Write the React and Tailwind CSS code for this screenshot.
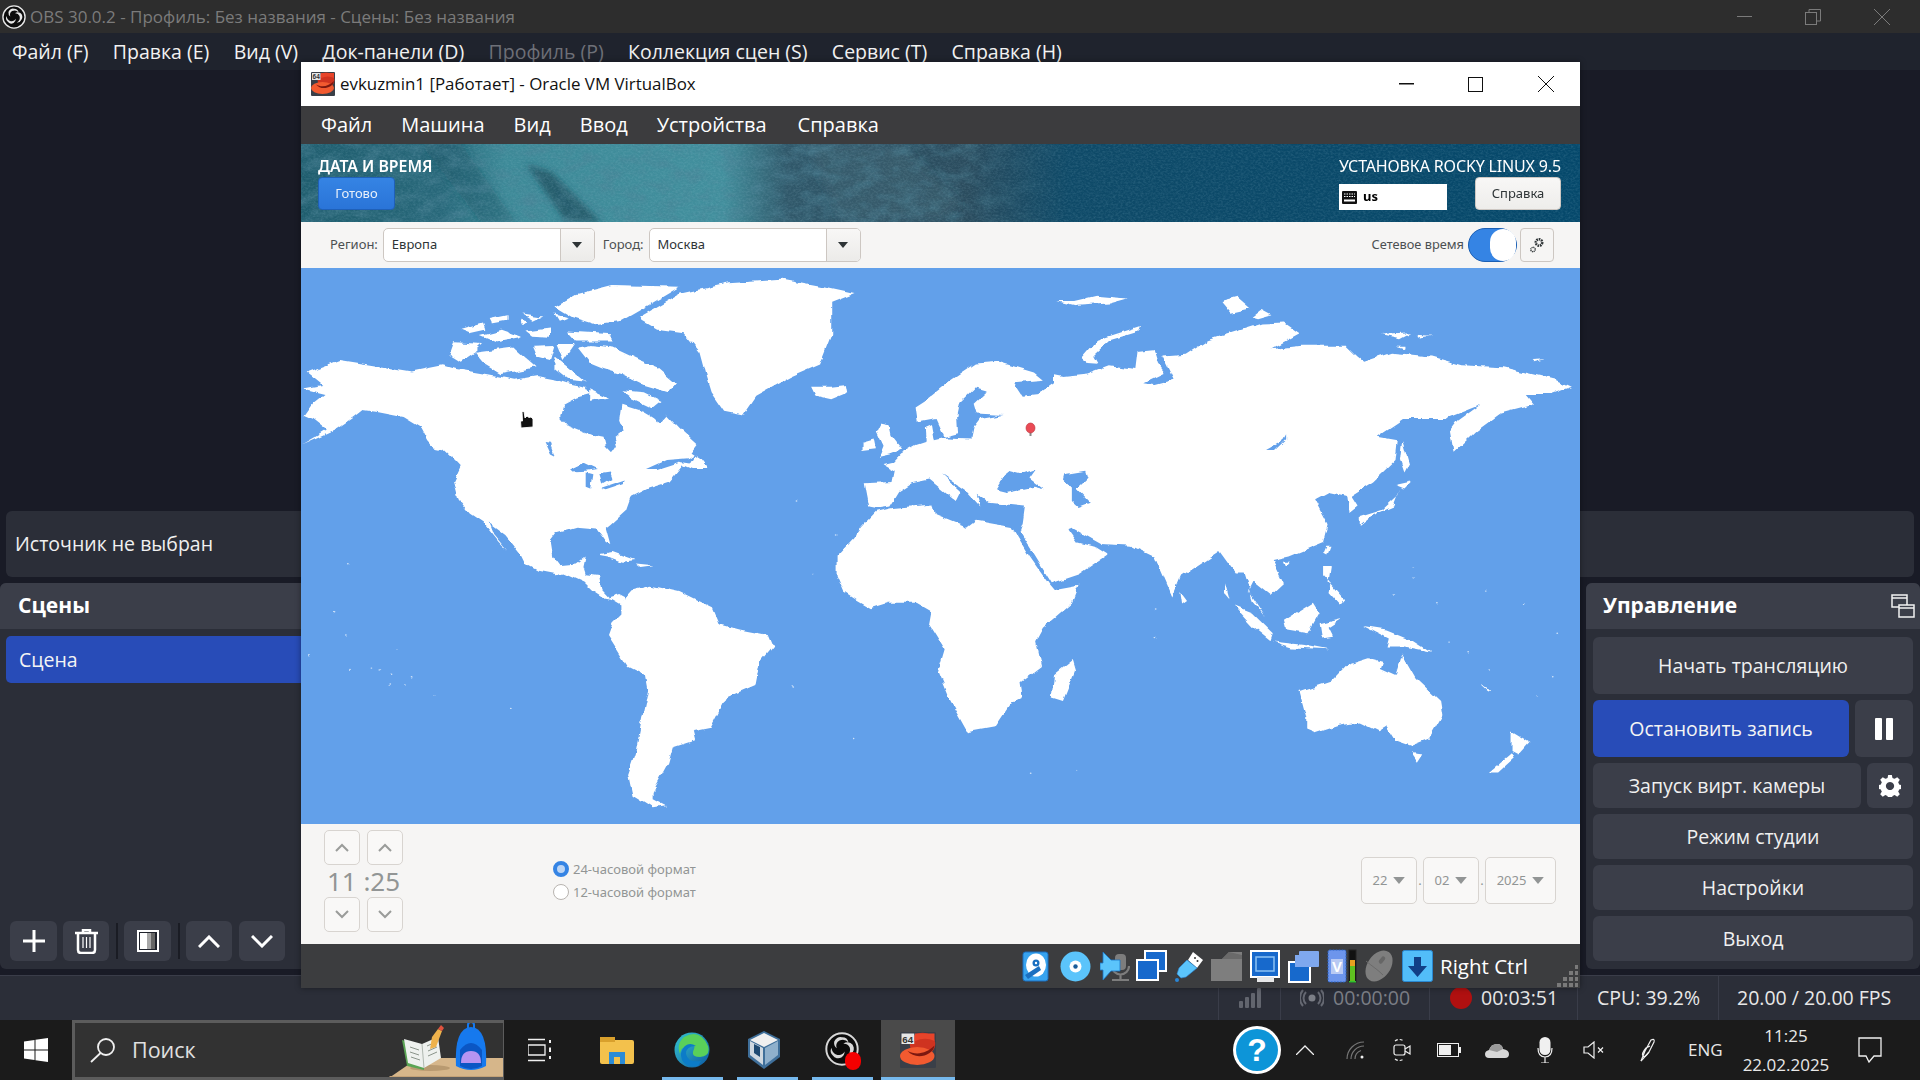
import React from "react";

const P = ({ p, f = "#fff" }) => <polygon points={p} fill={f} />;

const WorldMap = () => (
  <svg width="1279" height="556" viewBox="301 268 1279 556" className="block">
    <defs>
      <filter id="rough" filterUnits="userSpaceOnUse" x="301" y="268" width="1279" height="556">
        <feTurbulence type="fractalNoise" baseFrequency="0.07" numOctaves="3" seed="4" result="n" />
        <feDisplacementMap in="SourceGraphic" in2="n" scale="6" xChannelSelector="R" yChannelSelector="G" />
      </filter>
    </defs>
    <rect x="301" y="268" width="1279" height="556" fill="#62a0ea" />
    <g filter="url(#rough)">
      <g transform="matrix(0.4464,0,0,0.3571,300,260)">
        {/* North America */}
        <P p="15,315 90,280 150,292 250,312 320,295 350,305 420,320 480,335 530,325 575,335 600,345 640,355 650,375 620,385 590,405 583,440 600,465 640,485 680,495 685,520 700,540 710,520 705,500 725,480 715,450 720,405 770,425 790,440 800,455 820,430 850,470 890,515 875,540 900,560 915,585 880,585 860,575 830,620 780,640 740,665 730,700 695,740 685,750 695,795 685,790 665,755 620,750 575,765 560,790 565,830 580,855 620,850 640,830 635,860 640,880 670,885 675,925 690,945 715,935 730,945 720,965 700,950 680,945 655,925 635,900 590,875 575,880 535,870 505,850 495,825 460,770 425,738 435,770 465,815 445,790 410,735 380,710 355,670 345,620 360,580 345,560 320,530 300,525 285,505 270,470 230,440 170,425 140,420 120,440 85,470 50,490 5,515 40,490 60,475 30,445 10,435 30,400 55,375 5,360 50,350" />
        {/* lakes */}
        <P f="#62a0ea" p="548,510 560,512 570,548 560,542" />
        <P f="#62a0ea" p="605,585 635,568 665,585 640,590 610,592" />
        <P f="#62a0ea" p="640,595 655,600 650,640 640,635" />
        <P f="#62a0ea" p="668,600 695,595 700,612 675,630" />
        <P f="#62a0ea" p="675,638 730,615 725,625 685,642" />
        <P f="#62a0ea" p="775,585 820,560 870,555 888,540 875,570 850,565 800,585" />
        <P f="#62a0ea" p="795,415 822,432 805,455 785,440" />
        {/* arctic islands */}
        <P p="622,245 650,238 700,245 760,280 800,300 842,345 825,370 770,350 720,320 680,305 650,290" />
        <P p="390,260 480,245 530,300 450,320 410,290" />
        <P p="345,230 410,235 390,260 360,285 335,265" />
        <P p="570,130 620,95 700,70 850,75 790,120 720,170 660,180 610,160" />
        <P p="600,200 700,208 700,228 620,228" />
        <P p="360,195 410,178 415,195 380,205" />
        <P p="405,210 450,195 495,215 440,228" />
        <P p="505,200 560,192 560,218 520,215" />
        <P p="498,150 545,158 525,170" />
        <P p="520,240 570,238 560,280 530,270" />
        <P p="575,235 615,235 590,280" />
        <P p="570,270 600,300 640,340 600,335 570,305" />
        <P p="650,362 690,385 650,395" />
        <P p="720,365 770,370 810,395 790,415 740,385" />
        <P p="425,165 465,155 465,170 430,178" />
        <P p="495,170 510,175 500,185" />
        <P p="570,150 600,160 580,170" />
        {/* Greenland */}
        <P p="760,160 850,95 960,65 1080,55 1165,75 1240,95 1190,120 1190,210 1165,290 1100,325 1020,380 990,435 950,425 920,370 910,330 895,260 860,205 800,195 765,170" />
        {/* Iceland */}
        <P p="1145,355 1190,355 1225,350 1228,370 1190,390 1155,380" />
        {/* UK + Ireland */}
        <P p="1300,455 1320,460 1325,490 1350,530 1320,545 1295,552 1305,520 1290,480" />
        <P p="1258,510 1285,500 1290,530 1258,535" />
        {/* South America */}
        <P p="720,960 745,925 785,912 850,930 925,975 940,1020 985,1035 1050,1050 1060,1080 1030,1125 1020,1190 955,1225 920,1310 880,1320 885,1345 835,1365 825,1410 790,1490 790,1510 820,1530 790,1535 745,1500 735,1440 750,1385 780,1200 775,1165 735,1140 690,1050 700,1015 720,990" />
        {/* Caribbean */}
        <P p="665,825 700,818 750,840 720,845 690,830" />
        <P p="750,850 790,855 760,860" />
        {[[105,848],[75,982],[105,1050],[215,1090],[20,1108],[112,1152],[160,1140],[180,1145],[205,1160],[250,1170],[235,1190],[200,1190],[300,1220],[470,1250],[1105,1190],[1240,1340],[1150,880],[1200,770],[1110,672]].map(([x, y], i) => (
          <ellipse key={i} cx={x} cy={y} rx="2" ry="2" fill="#fff" opacity=".7" />
        ))}
      </g>
      <g transform="matrix(0.4464,0,0,0.3571,900,260)">
        {/* Eurasia */}
        <P p="-79,625 -19,622 -14,590 -39,572 -15,565 0,545 36,518 60,508 58,470 72,462 78,505 105,497 160,500 165,470 180,445 232,434 172,430 165,400 192,368 168,360 135,400 128,440 130,485 100,495 82,445 40,455 35,410 60,390 110,340 170,290 220,285 300,315 320,335 255,342 275,380 310,375 345,345 345,320 365,325 420,318 470,295 525,305 530,255 570,250 580,290 595,315 545,345 570,350 615,335 590,270 640,265 690,225 810,178 860,175 895,205 830,250 900,240 1000,240 1025,270 1040,285 1100,260 1190,270 1260,295 1350,300 1470,335 1505,355 1460,375 1400,375 1420,405 1345,430 1290,480 1240,540 1232,480 1250,450 1300,405 1220,445 1130,445 1070,495 1115,505 1110,560 1060,620 1010,660 1025,690 1005,710 1000,660 960,650 930,670 960,740 950,790 870,830 835,840 860,905 830,940 790,900 780,925 820,1000 790,955 770,875 750,875 715,815 630,885 610,945 570,830 520,800 450,795 385,750 375,755 395,790 440,805 465,825 400,880 340,905 268,760 275,735 280,690 200,680 172,652 180,690 150,650 92,600 135,650 125,675 66,615 26,625 -4,650 -24,690 -49,695 -69,690" />
        {/* Africa */}
        <P p="-54,705 -20,695 75,685 80,715 150,750 170,730 250,748 290,830 335,910 345,925 400,912 385,960 320,1030 305,1065 318,1140 270,1185 275,1225 250,1240 215,1305 150,1320 110,1230 85,1155 100,1090 65,1020 70,985 35,960 -25,960 -65,975 -100,950 -125,930 -142,880 -142,830 -105,780 -85,745" />
        {/* Seas */}
        <P f="#62a0ea" p="215,642 240,590 270,600 305,585 290,612 322,642 300,635 240,650" />
        <P f="#62a0ea" p="368,600 415,590 420,610 395,640 425,680 400,692 385,675 385,640 365,615" />
        <P f="#62a0ea" p="820,535 855,510 865,488 865,505 840,535" />
        {/* Islands */}
        <P p="405,275 440,225 540,185 535,200 470,225 435,265 445,288 415,285" />
        <P p="350,115 390,115 440,100 510,108 470,122 395,128" />
        <P p="718,115 755,103 785,135 740,148" />
        <P p="788,162 810,140 832,155 800,166" />
        <P p="1075,210 1145,205 1120,222" />
        <P p="1155,212 1190,215 1165,220" />
        <P p="1415,280 1445,278 1420,286" />
        <P p="1110,240 1130,240 1130,248" />
        <P p="345,1160 385,1120 392,1150 365,1235 340,1225" />
        <P p="628,930 643,955 632,965" />
        <P p="1125,505 1140,570 1130,595 1120,560" />
        <P p="1030,720 1080,700 1115,660 1120,640 1105,690 1060,715 1030,745" />
        <P p="1110,630 1145,620 1130,640" />
        <P p="955,800 962,800 955,825 948,820" />
        <P p="860,845 875,845 865,860" />
        <P p="950,860 965,860 960,900 995,950 985,965 960,930 965,900 950,880" />
        <P p="750,970 790,990 835,1045 830,1065 790,1025" />
        <P p="835,1068 920,1080 960,1090 880,1085" />
        <P p="860,1010 925,960 940,990 915,1045 865,1035" />
        <P p="940,1020 990,1005 960,1030 970,1055 945,1060" />
        <P p="1040,1025 1090,1035 1140,1060 1190,1100 1130,1085 1090,1085 1095,1060" />
        <P p="895,1210 965,1180 1000,1135 1050,1115 1080,1125 1075,1145 1110,1165 1125,1105 1155,1170 1210,1235 1215,1275 1185,1340 1145,1360 1110,1345 1090,1305 1070,1320 1030,1295 980,1305 930,1325 910,1315 910,1280" />
        <P p="1145,1378 1172,1382 1160,1405" />
        <P p="1370,1320 1410,1350 1385,1385 1370,1375" />
        <P p="1370,1380 1375,1395 1340,1435 1318,1435" />
        <P p="1300,1188 1322,1205 1318,1208" />
        <P p="728,905 738,950 728,935" />
        {[[575,980],[570,1060],[1150,860],[1150,890],[1105,935],[1205,960],[1310,930],[1395,960],[1470,1045],[1230,1070],[1275,1100],[1320,1145],[1460,1170],[1430,1220],[295,1440],[397,1432]].map(([x, y], i) => (
          <ellipse key={i} cx={x} cy={y} rx="2" ry="2" fill="#fff" opacity=".7" />
        ))}
      </g>
    </g>
    {/* pin */}
    <g>
      <rect x="1029.5" y="430" width="2" height="6" fill="#8a8a8a" />
      <ellipse cx="1030.5" cy="428" rx="4.5" ry="5" fill="#ea4b55" stroke="#b8323b" strokeWidth="0.6" />
    </g>
    {/* hand cursor */}
    <g transform="translate(519,410)">
      <path d="M3 1.5 L5 1.5 L6 8 L8 6 L10 7.5 L12 7 L14 9 L14 17 L2 18 L1.5 11 L3.5 11 Z" fill="#111" stroke="#fff" strokeWidth="0.9" />
    </g>
  </svg>
);

const Banner = () => (
  <svg width="1279" height="78" viewBox="0 0 1279 78" className="absolute inset-0">
    <defs>
      <linearGradient id="bg" x1="0" x2="1" y1="0" y2="0">
        <stop offset="0" stopColor="#1f5d6e" />
        <stop offset="0.11" stopColor="#28687a" />
        <stop offset="0.16" stopColor="#3d8a98" />
        <stop offset="0.33" stopColor="#428f9d" />
        <stop offset="0.38" stopColor="#30586a" />
        <stop offset="0.52" stopColor="#2b4c5e" />
        <stop offset="0.6" stopColor="#0f4a68" />
        <stop offset="1" stopColor="#05486b" />
      </linearGradient>
      <filter id="blur"><feGaussianBlur stdDeviation="3" /></filter>
      <filter id="noise" x="0" y="0" width="100%" height="100%">
        <feTurbulence type="fractalNoise" baseFrequency="0.4 0.55" numOctaves="3" seed="7" />
        <feColorMatrix values="0 0 0 0 0.45  0 0 0 0 0.7  0 0 0 0 0.8  0.9 0 0 0 -0.32" />
      </filter>
      <filter id="noise2" x="0" y="0" width="100%" height="100%">
        <feTurbulence type="fractalNoise" baseFrequency="0.05 0.08" numOctaves="5" seed="11" />
        <feColorMatrix values="0 0 0 0 0.07  0 0 0 0 0.22  0 0 0 0 0.3  2 0 0 0 -0.8" />
      </filter>
      <linearGradient id="fade" x1="0" x2="1" y1="0" y2="0">
        <stop offset="0" stopColor="#fff" />
        <stop offset="0.5" stopColor="#fff" />
        <stop offset="0.6" stopColor="#000" />
      </linearGradient>
      <mask id="m"><rect width="1279" height="78" fill="url(#fade)" /></mask>
    </defs>
    <rect width="1279" height="78" fill="url(#bg)" />
    <g filter="url(#blur)">
      <polygon points="225,20 250,28 300,78 265,78" fill="#1c4a5a" opacity=".7" />
      <polygon points="120,0 160,0 215,78 180,78" fill="#1c4f5e" opacity=".4" />
      <polygon points="505,0 600,0 660,60 640,78 540,78" fill="#3a5f70" opacity=".6" />
    </g>
    <rect width="1279" height="78" filter="url(#noise2)" mask="url(#m)" opacity=".6" />
    <rect width="1279" height="78" filter="url(#noise)" opacity=".3" />
  </svg>
);

const Caret = ({ c = "#2e3436", w = 10, h = 6 }) => (
  <svg width={w} height={h} viewBox="0 0 10 6"><polygon points="0,0 10,0 5,6" fill={c} /></svg>
);

const Combo = ({ text }) => (
  <div className="w-[212px] h-[34px] rounded-[5px] border border-[#cdc7c2] bg-white flex overflow-hidden">
    <div className="flex-1 pl-[8px] flex items-center text-[13px] text-[#2e3436]">{text}</div>
    <div className="w-[34px] bg-gradient-to-b from-[#f8f7f6] to-[#ecebe9] border-l border-[#cdc7c2] flex items-center justify-center"><Caret /></div>
  </div>
);

const Spin = ({ d }) => (
  <div className="w-[36px] h-[35px] rounded-[5px] border border-[#d8d4d0] bg-[#f9f8f7] flex items-center justify-center">
    <svg width="14" height="9" viewBox="0 0 14 9" fill="none" stroke="#9a9c9a" strokeWidth="2"><path d={d} /></svg>
  </div>
);

const DateBox = ({ t, w }) => (
  <div className={`${w} h-[47px] rounded-[5px] border border-[#d8d4d0] bg-[#f9f8f7] flex items-center justify-center gap-[6px] text-[13px] text-[#929595]`}>
    {t}<Caret c="#929595" w="12" h="7" />
  </div>
);

const HddIcon = () => (
  <svg width="27" height="31" viewBox="0 0 27 31">
    <rect x="1" y="1" width="25" height="29" rx="2.5" fill="#38a3ee" stroke="#1a6fc0" />
    <ellipse cx="14" cy="14" rx="10" ry="11.5" fill="#fff" />
    <circle cx="14" cy="12" r="3.5" fill="#1a6fc0" />
    <circle cx="14" cy="12" r="1.2" fill="#fff" />
    <path d="M3 24 L17 15 L19 19 L6 28 Z" fill="#1a6fc0" />
  </svg>
);
const CdIcon = () => (
  <svg width="31" height="31" viewBox="0 0 31 31">
    <circle cx="15.5" cy="15.5" r="15" fill="#5bc4fb" />
    <circle cx="15.5" cy="15.5" r="6" fill="#fff" />
    <circle cx="15.5" cy="15.5" r="2.2" fill="#1a5d9a" />
  </svg>
);
const AudioIcon = () => (
  <svg width="30" height="31" viewBox="0 0 30 31">
    <rect x="15" y="3" width="11" height="16" rx="4" fill="#7d7d7d" />
    <path d="M12 15 a8.5 8.5 0 0 0 17 0 M20.5 24 v4 M12 29 h17" stroke="#7d7d7d" strokeWidth="2.2" fill="none" />
    <polygon points="0,12 3,12 3,1 11,9 20,9 20,20 11,20 3,29 3,19 0,19" fill="#5bc4fb" stroke="#1a76c8" strokeWidth="0.8" />
  </svg>
);
const NetIcon = () => (
  <svg width="31" height="32" viewBox="0 0 31 32">
    <rect x="9" y="1" width="21" height="20" fill="#1769cc" stroke="#fff" strokeWidth="2" />
    <rect x="1" y="10" width="21" height="20" fill="#1769cc" stroke="#fff" strokeWidth="2" />
  </svg>
);
const UsbIcon = () => (
  <svg width="30" height="31" viewBox="0 0 30 31">
    <path d="M19 1 L29 9 L23 17 L14 9 Z" fill="#fff" />
    <circle cx="21" cy="7" r="1" fill="#333" /><circle cx="23.5" cy="10" r="1" fill="#333" />
    <path d="M13 9 L23 17 L12 26 L7 27 L3 23 L5 17 Z" fill="#5bc4fb" stroke="#2b86d6" strokeWidth="0.6" />
    <circle cx="3" cy="29" r="2" fill="#2b86d6" />
  </svg>
);
const FolderIcon = () => (
  <svg width="31" height="31" viewBox="0 0 31 31">
    <path d="M0 8 L11 8 L18 1 L31 1 L31 30 L0 30 Z" fill="#7e7e7e" />
    <path d="M18 1 L11 8 L31 8 L31 4" fill="#6a6a6a" />
  </svg>
);
const DisplayIcon = () => (
  <svg width="30" height="33" viewBox="0 0 30 33">
    <rect x="1" y="1" width="28" height="26" fill="#1769cc" stroke="#fff" strokeWidth="2" />
    <rect x="6" y="7" width="18" height="14" fill="#1769cc" stroke="#8cc2f4" strokeWidth="1.5" />
    <rect x="7" y="27" width="17" height="5" fill="#e8e8e8" />
  </svg>
);
const SharedIcon = () => (
  <svg width="31" height="33" viewBox="0 0 31 33">
    <rect x="1" y="12" width="21" height="20" fill="#1769cc" stroke="#fff" strokeWidth="2" />
    <rect x="11" y="1" width="20" height="16" rx="1" fill="#7fa8ee" />
    <rect x="7" y="5" width="7" height="12" fill="#7fa8ee" />
  </svg>
);
const VIcon = () => (
  <svg width="30" height="34" viewBox="0 0 30 34">
    <rect x="1" y="1" width="18" height="32" rx="1.5" fill="#6d95ec" stroke="#2b62c4" strokeDasharray="2 1" />
    <rect x="4" y="10" width="12" height="15" fill="#b8c9f3" />
    <text x="10" y="23" textAnchor="middle" fontSize="15" fontWeight="700" fill="#fff" fontFamily="Liberation Sans">V</text>
    <rect x="22" y="1" width="7" height="32" fill="#111" stroke="#222" />
    <rect x="23" y="11" width="5" height="6" fill="#e8a020" />
    <rect x="23" y="17" width="5" height="15" fill="#5fc020" />
    <rect x="22" y="32" width="7" height="1.5" fill="#30c030" />
  </svg>
);
const MouseIcon = () => (
  <svg width="32" height="34" viewBox="0 0 32 34">
    <ellipse cx="16" cy="17" rx="11.5" ry="17" fill="#7e7e7e" transform="rotate(35 16 17)" />
    <path d="M3 12 C10 18 14 20 20 26" stroke="#6a6a6a" strokeWidth="1" fill="none" />
    <rect x="17" y="7" width="4" height="8" rx="2" fill="#666" transform="rotate(38 19 11)" />
  </svg>
);
const DownIcon = () => (
  <svg width="31" height="32" viewBox="0 0 31 32">
    <rect x="0.5" y="0.5" width="30" height="31" rx="2" fill="#52bdf9" stroke="#2a88d0" />
    <polygon points="12,7 19,7 19,16 25,16 15.5,27 6,16 12,16" fill="#113f86" />
  </svg>
);
const Grip = () => (
  <svg width="23" height="24" viewBox="0 0 23 24" fill="#7a7a7a">
    {[[16,0],[16,6],[10,6],[16,12],[10,12],[4,12],[16,18],[10,18],[4,18],[-2,18]].map(([x, y], i) => <rect key={i} x={x + 4} y={y + 1} width="4" height="4" />)}
  </svg>
);

const ObsLogo = ({ s = 26, c = "#e8e8e8" }) => (
  <svg width={s} height={s} viewBox="0 0 26 26">
    <circle cx="13" cy="13" r="12" fill="#0c0c0c" stroke={c} strokeWidth="1.5" />
    <path d="M13 4 a5 5 0 0 1 5 4 a6 6 0 0 0 -7 -1.5 a5 5 0 0 0 -2 6 a5.5 5.5 0 0 1 -2 -5 a5 5 0 0 1 6 -3.5 Z" fill={c} />
    <path d="M21 16 a5 5 0 0 1 -5 3 a6 6 0 0 0 3 -7 a5 5 0 0 0 -5 -3 a5.5 5.5 0 0 1 5.5 -.5 a5 5 0 0 1 1.5 7.5 Z" fill={c} />
    <path d="M6 18 a5 5 0 0 1 -1 -6 a6 6 0 0 0 4.5 5.5 a5 5 0 0 0 5.5 -2.5 a5.5 5.5 0 0 1 -2.5 4.5 a5 5 0 0 1 -6.5 -1.5 Z" fill={c} />
  </svg>
);

const VmIcon = ({ s = 24, h = 24 }) => (
  <svg width={s} height={h} viewBox="0 0 24 24">
    <rect x="0" y="0" width="24" height="24" rx="1" fill="#3a3f48" />
    <ellipse cx="15" cy="8" rx="8.5" ry="7.5" fill="#cf3320" />
    <path d="M10 1 H23 V6 Q17 3 10 6 Z" fill="#e8442a" />
    <ellipse cx="11.5" cy="16" rx="11.5" ry="6" fill="#f25a30" />
    <path d="M5 12.5 C11 16 18 14 23 9 C22 16 10 19 5 12.5 Z" fill="#7d1810" />
    <rect x="1" y="1" width="8.5" height="7" fill="#e6e6e6" />
    <text x="5.2" y="7" textAnchor="middle" fontSize="6.5" fontWeight="700" fill="#333" fontFamily="Liberation Sans">64</text>
  </svg>
);

const DockBtn = ({ children, cls = "w-[47px]" }) => (
  <div className={`${cls} h-[40px] rounded-[6px] bg-[#3b3e49] flex items-center justify-center`}>{children}</div>
);

const CtlBtn = ({ children, cls = "w-full h-[45px]" }) => (
  <div className={`${cls} rounded-[6px] bg-[#3b3e49] flex items-center justify-center text-[19.5px] text-[#f0f0f0]`}>{children}</div>
);

const Sep = () => <div className="w-[2px] h-[36px] bg-[#1a1c24] mx-[6.5px]" />;

const StatCell = ({ cls, children }) => (
  <div className={`${cls} h-full border-l border-[#3a3d49] flex items-center`}>{children}</div>
);

const TaskUnder = ({ cls }) => <div className={`absolute bottom-0 h-[3px] bg-[#76b9ed] ${cls}`} />;

export default function App() {
  return (
    <div className="relative w-[1920px] h-[1080px] overflow-hidden bg-[#191b26] flex flex-col font-['Open_Sans',sans-serif]">
      {/* OBS title */}
      <div className="h-[33px] shrink-0 bg-[#2d2d2d] flex items-center pl-[2px] text-[#7b7b7b]">
        <ObsLogo s={24} />
        <span className="ml-[4px] text-[17px]">OBS 30.0.2 - Профиль: Без названия - Сцены: Без названия</span>
        <div className="ml-auto flex items-center h-full">
          <svg width="15" height="2" className="mr-[53px]"><rect width="15" height="1" fill="#7b7b7b" /></svg>
          <svg width="16" height="16" viewBox="0 0 16 16" fill="none" stroke="#7b7b7b" className="mr-[53px]"><rect x=".5" y="3.5" width="11" height="12" /><path d="M4 3 V.5 H15.5 V12 H12" /></svg>
          <svg width="16" height="16" viewBox="0 0 16 16" stroke="#7b7b7b" className="mr-[30px]"><path d="M0 0 L16 16 M16 0 L0 16" /></svg>
        </div>
      </div>
      {/* OBS menu */}
      <div className="h-[37px] shrink-0 bg-[#1f232d] flex items-center pl-[12px] gap-[24.3px] text-[19.5px] text-[#f2f2f2]">
        <span>Файл (F)</span><span>Правка (E)</span><span>Вид (V)</span><span>Док-панели (D)</span>
        <span className="text-[#6e7078]">Профиль (P)</span><span>Коллекция сцен (S)</span><span>Сервис (T)</span><span>Справка (H)</span>
      </div>
      {/* OBS main */}
      <div className="flex-1 flex flex-col justify-end">
        <div className="h-[66px] mx-[6px] rounded-[6px] bg-[#2b2e38] flex items-center pl-[9px] text-[19.5px] text-[#f0f0f0]">Источник не выбран</div>
        <div className="h-[392px] mt-[6px] flex justify-between">
          <div className="w-[330px] h-[386px] rounded-[6px] bg-[#2b2e38] flex flex-col">
            <div className="h-[46px] rounded-t-[6px] bg-[#3b3e49] flex items-center pl-[18px] text-[21px] font-bold text-white">Сцены</div>
            <div className="h-[47px] mt-[7px] mx-[6px] rounded-[5px] bg-[#284cb8] flex items-center pl-[13px] text-[19.5px] text-[#f4f4f4]">Сцена</div>
            <div className="mt-auto mb-[8px] ml-[10px] flex items-center">
              <DockBtn><svg width="22" height="22" viewBox="0 0 22 22" fill="#fff"><rect x="9.5" y="0" width="3" height="22" /><rect x="0" y="9.5" width="22" height="3" /></svg></DockBtn>
              <DockBtn cls="w-[46px] ml-[6px]"><svg width="23" height="25" viewBox="0 0 23 25" fill="none" stroke="#fff" strokeWidth="2.5"><path d="M0 4 H23 M8 3 V1 H15 V3" /><path d="M3 5 V21 Q3 24 6 24 H17 Q20 24 20 21 V5" /><path d="M8 8 V19 M11.5 8 V19 M15 8 V19" strokeWidth="1.2" /></svg></DockBtn>
              <Sep />
              <DockBtn><svg width="22" height="22" viewBox="0 0 22 22"><rect x="1" y="1" width="20" height="20" fill="#1f222b" stroke="#fff" strokeWidth="2" /><rect x="3" y="3" width="7" height="16" fill="#fff" /><rect x="10" y="3" width="4" height="16" fill="#a8a8a8" /><rect x="14" y="3" width="4" height="16" fill="#666" /></svg></DockBtn>
              <Sep />
              <DockBtn cls="w-[46px]"><svg width="22" height="13" viewBox="0 0 22 13" fill="none" stroke="#fff" strokeWidth="3"><path d="M1 12 L11 2 L21 12" /></svg></DockBtn>
              <DockBtn cls="w-[46px] ml-[7px]"><svg width="22" height="13" viewBox="0 0 22 13" fill="none" stroke="#fff" strokeWidth="3"><path d="M1 1 L11 11 L21 1" /></svg></DockBtn>
            </div>
          </div>
          <div className="w-[334px] h-[386px] rounded-[6px] bg-[#2b2e38] flex flex-col">
            <div className="h-[46px] rounded-t-[6px] bg-[#3b3e49] flex items-center justify-between pl-[17px] pr-[5px] text-[21px] font-bold text-white">
              <span>Управление</span>
              <svg width="24" height="24" viewBox="0 0 24 24" fill="none" stroke="#f2f2f2" strokeWidth="1.5"><rect x="1" y="1" width="15" height="12" /><rect x="8" y="11" width="15" height="12" fill="#3b3e49" /><path d="M1 4 H16 M8 14 H23" /></svg>
            </div>
            <div className="px-[7px] pt-[8px] flex flex-col gap-[6px]">
              <CtlBtn cls="w-full h-[57px]">Начать трансляцию</CtlBtn>
              <div className="flex gap-[6px]">
                <div className="flex-1 h-[57px] rounded-[6px] bg-[#284cb8] flex items-center justify-center text-[19.5px] text-[#f4f4f4]">Остановить запись</div>
                <CtlBtn cls="w-[58px] h-[57px]"><svg width="18" height="22" viewBox="0 0 18 22" fill="#fff"><rect width="7" height="22" rx="1" /><rect x="11" width="7" height="22" rx="1" /></svg></CtlBtn>
              </div>
              <div className="flex gap-[6px]">
                <CtlBtn cls="flex-1 h-[45px]">Запуск вирт. камеры</CtlBtn>
                <CtlBtn cls="w-[46px] h-[45px]"><svg width="22" height="22" viewBox="0 0 24 24" fill="#fff"><path fillRule="evenodd" d="M10 0 h4 l.7 3.2 a9 9 0 0 1 2.4 1 l2.8 -1.8 2.8 2.8 -1.8 2.8 a9 9 0 0 1 1 2.4 l3.1 .6 v4 l-3.1 .7 a9 9 0 0 1 -1 2.4 l1.8 2.8 -2.8 2.8 -2.8 -1.8 a9 9 0 0 1 -2.4 1 l-.7 3.1 h-4 l-.7 -3.1 a9 9 0 0 1 -2.4 -1 l-2.8 1.8 -2.8 -2.8 1.8 -2.8 a9 9 0 0 1 -1 -2.4 l-3.2 -.7 v-4 l3.2 -.6 a9 9 0 0 1 1 -2.4 l-1.8 -2.8 2.8 -2.8 2.8 1.8 a9 9 0 0 1 2.4 -1 z M12 7.5 a4.5 4.5 0 1 0 .01 0 z" /></svg></CtlBtn>
              </div>
              <CtlBtn>Режим студии</CtlBtn>
              <CtlBtn>Настройки</CtlBtn>
              <CtlBtn>Выход</CtlBtn>
            </div>
          </div>
        </div>
      </div>
      {/* OBS status */}
      <div className="h-[45px] shrink-0 bg-[#2b2e38] border-t border-[#3a3d49] flex justify-end text-[19.5px] text-[#e8e8e8]">
        <StatCell cls="w-[62px] justify-center"><svg width="24" height="20" viewBox="0 0 24 20" fill="#62656e"><rect x="1" y="13" width="4" height="7" rx="1" /><rect x="7" y="9" width="4" height="11" rx="1" /><rect x="13" y="5" width="4" height="15" rx="1" /><rect x="19" y="0" width="4" height="20" rx="1" /></svg></StatCell>
        <StatCell cls="w-[149px] text-[#7b7e86] pl-[19px] gap-[9px]"><svg width="24" height="20" viewBox="0 0 24 20" fill="none" stroke="#666973" strokeWidth="2"><circle cx="12" cy="10" r="3.5" fill="#7b7e86" stroke="none" /><path d="M6 16 a8.5 8.5 0 0 1 0 -12 M18 4 a8.5 8.5 0 0 1 0 12 M3 18 a12 12 0 0 1 0 -16 M21 2 a12 12 0 0 1 0 16" /></svg><span>00:00:00</span></StatCell>
        <StatCell cls="w-[148px] pl-[20px] gap-[9px]"><span className="w-[22px] h-[22px] rounded-full bg-[#b01010]" /><span>00:03:51</span></StatCell>
        <StatCell cls="w-[141px] pl-[19px]">CPU: 39.2%</StatCell>
        <StatCell cls="w-[202px] pl-[18px]">20.00 / 20.00 FPS</StatCell>
      </div>
      {/* Taskbar */}
      <div className="relative h-[60px] shrink-0 bg-[#1b1b1b] flex items-center text-[#e8e8e8]">
        <div className="w-[72px] flex justify-center">
          <svg width="24" height="24" viewBox="0 0 24 24" fill="#fff"><path d="M0 3.5 L10.5 2 V11.5 H0 Z M11.5 1.8 L24 0 V11.5 H11.5 Z M0 12.5 H10.5 V22 L0 20.5 Z M11.5 12.5 H24 V24 L11.5 22.2 Z" /></svg>
        </div>
        <div className="relative w-[432px] h-full bg-[#323232] border-t-[3px] border-l-[3px] border-r-[1px] border-b-[3px] border-[#5c5c5c] flex items-center pl-[15px] overflow-hidden">
          <svg width="26" height="26" viewBox="0 0 26 26" fill="none" stroke="#f0f0f0" strokeWidth="1.8"><circle cx="16" cy="10" r="8" /><path d="M10.5 16 L1 25" /></svg>
          <span className="ml-[16px] text-[21.5px] text-[#e0e0e0]">Поиск</span>
          <svg width="117" height="60" viewBox="0 0 117 60" className="absolute right-0 top-[-3px]">
            <polygon points="32,38 117,38 117,60 0,60" fill="#d6b68a" />
            <polygon points="4,56 117,56 117,60 0,60" fill="#c4a277" />
            <ellipse cx="44" cy="48" rx="20" ry="3" fill="#b99a70" />
            <polygon points="16,20 38,26 38,50 21,46" fill="#5aa454" />
            <polygon points="18,19 36,24 52,17 55,38 38,48 22,43" fill="#eef1ee" />
            <path d="M36 24 L38 48" stroke="#b0b8b0" />
            <path d="M24 27 l9 3 M24 32 l9 3 M25 37 l9 3 M41 26 l9 -4 M42 31 l9 -4 M42 36 l9 -4" stroke="#8a948a" />
            <polygon points="46,17 52,9 56,11 50,27 44,29" fill="#eeb24b" />
            <polygon points="52,9 55,5 58,8 56,11" fill="#e0523e" />
            <path d="M70 46 Q68 8 85 7 Q102 8 100 46 Q85 54 70 46Z" fill="#1679ee" />
            <rect x="82" y="2" width="6" height="9" rx="3" fill="none" stroke="#1679ee" strokeWidth="2" />
            <path d="M74 46 V30 Q85 16 96 30 V46 Q85 52 74 46 Z" fill="#0b56c4" />
            <path d="M75 43 Q75 31 85 31 Q95 31 95 43 Z" fill="#b694f2" />
          </svg>
        </div>
        <svg width="24" height="24" viewBox="0 0 24 24" className="ml-[24px]" fill="none" stroke="#f0f0f0" strokeWidth="1.3"><path d="M0 1.5 H17 M0 22.5 H17 M0 7 H17 V17 H0 Z" /><path d="M22 2 V5 M22 9.5 V14 M22 18 V21" strokeWidth="2" /></svg>
        <svg width="34" height="27" viewBox="0 0 34 27" className="ml-[48px]"><path d="M0 2 Q0 0 2 0 H12 L15 3 H32 Q34 3 34 5 V25 Q34 27 32 27 H2 Q0 27 0 25Z" fill="#f3c14c" /><rect x="0" y="0" width="15" height="5" fill="#d9a02c" /><path d="M9 27 V15 H25 V27 H20 V20 H14 V27Z" fill="#2b8bd6" /></svg>
        <svg width="36" height="36" viewBox="0 0 36 36" className="ml-[40px]">
          <defs><linearGradient id="e1" x1="0" x2="1" y1="0" y2="1"><stop offset="0" stopColor="#36c6d0" /><stop offset="1" stopColor="#0c59a4" /></linearGradient></defs>
          <circle cx="18" cy="18" r="17.5" fill="url(#e1)" />
          <path d="M10 5 Q26 -4 34 14 Q37 24 26 25 Q16 25 20 17 Q22 12 14 13 Q6 16 6 22 Q2 12 10 5Z" fill="#5ad05a" />
          <path d="M22 14 Q12 14 12 22 Q14 31 27 29 L24 34 Q12 36 8 28 Q5 20 11 14 Q16 10 22 14Z" fill="#0c7cc8" />
        </svg>
        <svg width="32" height="38" viewBox="0 0 32 38" className="ml-[38px]"><polygon points="16,0 32,8 32,26 16,38 0,26 0,8" fill="#3f6f9a" /><polygon points="16,2 30,9 16,16 2,9" fill="#f0f0f0" /><polygon points="2,10 15,17 15,34 2,24" fill="#cfd8e0" /><polygon points="30,10 17,17 17,34 30,24" fill="#8fb0cc" /><polygon points="6,13 12,16 12,26 6,22" fill="#1f4a72" /></svg>
        <div className="relative ml-[45px] w-[36px] h-[36px]">
          <ObsLogo s={34} c="#d8d8d8" />
          <span className="absolute right-0 bottom-[-2px] w-[16px] h-[18px] rounded-full bg-[#f40000]" />
        </div>
        <div className="ml-[20px] w-[74px] h-full bg-[#4a4a4a] flex items-center justify-center">
          <VmIcon s={36} h={36} />
        </div>
        <TaskUnder cls="left-[662px] w-[61px]" />
        <TaskUnder cls="left-[737px] w-[61px]" />
        <TaskUnder cls="left-[812px] w-[61px]" />
        <TaskUnder cls="left-[881px] w-[74px]" />

        <div className="ml-auto flex items-center h-full">
          <div className="w-[48px] h-[48px] rounded-full bg-white flex items-center justify-center">
            <div className="w-[42px] h-[42px] rounded-full bg-[#0d95d8] flex items-center justify-center text-white font-bold text-[32px] font-['Liberation_Sans']">?</div>
          </div>
          <svg width="18" height="10" viewBox="0 0 18 10" className="ml-[15px]" fill="none" stroke="#f0f0f0" strokeWidth="1.3"><path d="M0 10 L9 1 L18 10" /></svg>
          <svg width="18" height="18" viewBox="0 0 18 18" className="ml-[32px]" fill="none" stroke="#777" strokeWidth="1.2"><path d="M1 18 A17 17 0 0 1 18 1 M5 18 A13 13 0 0 1 18 5 M9 18 A9 9 0 0 1 15 9.5" /><circle cx="16" cy="16" r="1.5" fill="#f0f0f0" stroke="none" /></svg>
          <svg width="18" height="24" viewBox="0 0 18 24" className="ml-[29px]" fill="none" stroke="#f0f0f0" strokeWidth="1.2"><rect x="1" y="7" width="11" height="10" rx="2" /><path d="M12 11 L17 8 V16 L12 13" /><path d="M2 3 Q6 0 11 3 M2 21 Q6 24 11 21" strokeDasharray="3 2" /></svg>
          <svg width="24" height="14" viewBox="0 0 24 14" className="ml-[26px]"><rect x=".5" y=".5" width="21" height="13" fill="none" stroke="#f0f0f0" /><rect x="2" y="2" width="12" height="10" fill="#f0f0f0" /><rect x="22" y="4" width="2" height="6" fill="#f0f0f0" /></svg>
          <svg width="24" height="15" viewBox="0 0 24 15" className="ml-[24px]"><path d="M4 15 Q0 15 0 11 Q0 8 4 7 Q6 1 12 1 Q17 1 18 6 Q24 7 24 11 Q24 15 20 15Z" fill="#d8d8d8" /><path d="M4 7 Q6 1 12 1 Q17 1 18 6 L12 9Z" fill="#9a9a9a" /></svg>
          <svg width="16" height="26" viewBox="0 0 16 26" className="ml-[28px]"><rect x="2.5" y="0" width="11" height="18" rx="5.5" fill="#f0f0f0" /><path d="M1 11 Q1 20 8 20 Q15 20 15 11 M8 20 V26 M4 26 H12" stroke="#f0f0f0" fill="none" strokeWidth="1.2" /></svg>
          <svg width="22" height="18" viewBox="0 0 22 18" className="ml-[29.5px]" fill="none" stroke="#f0f0f0" strokeWidth="1.2"><path d="M1 6 H5 L11 1 V17 L5 12 H1 Z" /><path d="M15 6.5 L20 11.5 M20 6.5 L15 11.5" /></svg>
          <svg width="16" height="24" viewBox="0 0 16 24" className="ml-[35.5px]" fill="none" stroke="#f0f0f0" strokeWidth="1.2"><path d="M1 23 L5 13 L11 2 Q15 0 14 4 L9 14 Q5 20 3 18 Q1 16 6 10 L10 8" /><path d="M1 23 L9 14" /></svg>
          <span className="ml-[32px] text-[17px] w-[34px]">ENG</span>
          <div className="ml-[20px] w-[88px] text-[17px] leading-[29px] text-center">
            <div>11:25</div><div>22.02.2025</div>
          </div>
          <svg width="24" height="26" viewBox="0 0 24 26" className="ml-[28px] mr-[38px]" fill="none" stroke="#f0f0f0" strokeWidth="1.3"><path d="M1 1 H23 V19 H16 L11 25 L8 19 H1 Z" /></svg>
        </div>
      </div>

      {/* VirtualBox window */}
      <div className="absolute left-[301px] top-[62px] w-[1279px] h-[926px] flex flex-col shadow-[0_0_6px_rgba(0,0,0,0.4)]">
        <div className="h-[44px] bg-white flex items-center pl-[10px] text-black">
          <VmIcon />
          <span className="ml-[5px] text-[16.9px] text-[#111]">evkuzmin1 [Работает] - Oracle VM VirtualBox</span>
          <div className="ml-auto flex items-center">
            <svg width="15" height="2"><rect width="15" height="1.5" fill="#111" /></svg>
            <svg width="15" height="15" className="ml-[54px]" fill="none" stroke="#111"><rect x=".5" y=".5" width="14" height="14" /></svg>
            <svg width="16" height="16" className="ml-[55px] mr-[26px]" stroke="#111"><path d="M0 0 L16 16 M16 0 L0 16" /></svg>
          </div>
        </div>
        <div className="h-[38px] bg-[#3c3c3e] flex items-center pl-[20px] gap-[29px] text-[20px] text-white">
          <span>Файл</span><span>Машина</span><span>Вид</span><span>Ввод</span><span>Устройства</span><span className="ml-[2px]">Справка</span>
        </div>
        <div className="relative h-[78px] overflow-hidden font-['Noto_Sans',sans-serif]">
          <Banner />
          <div className="relative h-full flex justify-between pl-[17px] pr-[19px] pt-[11px]">
            <div className="flex flex-col">
              <span className="text-[15.8px] leading-[22px] font-semibold text-white">ДАТА И ВРЕМЯ</span>
              <div className="w-[77px] h-[33px] rounded-[4px] bg-gradient-to-b from-[#3584e4] to-[#2a74d8] border border-[#1f60b8] flex items-center justify-center text-[13px] text-[#e8f0fa]">Готово</div>
            </div>
            <div className="w-[222px] flex flex-col">
              <span className="text-[16px] leading-[22px] text-white text-right whitespace-nowrap tracking-[-0.15px]">УСТАНОВКА ROCKY LINUX 9.5</span>
              <div className="flex justify-between items-start">
                <div className="w-[108px] h-[26px] mt-[7px] bg-white flex items-center pl-[3px] text-black font-bold text-[13px]">
                  <svg width="15" height="13" viewBox="0 0 15 13"><rect width="15" height="13" rx="1" fill="#111" /><path d="M2 3 h11 M2 5.5 h11" stroke="#fff" strokeDasharray="1.5 1" /><rect x="2" y="8.5" width="11" height="2" fill="#fff" /></svg>
                  <span className="ml-[6px]">us</span>
                </div>
                <div className="w-[86px] h-[33px] rounded-[4px] bg-gradient-to-b from-[#f8f7f6] to-[#eeedeb] border border-[#cdc7c2] flex items-center justify-center text-[13px] text-[#2e3436]">Справка</div>
              </div>
            </div>
          </div>
        </div>
        <div className="h-[46px] bg-[#f6f5f4] flex items-center pl-[29px] pr-[26px] text-[13px] text-[#4c5052] font-['Noto_Sans',sans-serif]">
          <span>Регион:</span>
          <div className="ml-[5px]"><Combo text="Европа" /></div>
          <span className="ml-[8px]">Город:</span>
          <div className="ml-[5px]"><Combo text="Москва" /></div>
          <span className="ml-auto text-[12.8px]">Сетевое время</span>
          <div className="relative ml-[4px] w-[49px] h-[34px] rounded-[17px] bg-[#3584e4] border border-[#1b5fb4]">
            <span className="absolute right-0 top-0 w-[26px] h-[32px] rounded-[16px] bg-white" />
          </div>
          <div className="ml-[3px] w-[34px] h-[34px] rounded-[4px] bg-[#f6f5f4] border border-[#cdc7c2] flex items-center justify-center">
            <svg width="16" height="18" viewBox="0 0 16 18" fill="none" stroke="#2e3436"><circle cx="10" cy="6.5" r="3.2" strokeWidth="2.6" strokeDasharray="1.6 .8" /><circle cx="4" cy="13.5" r="2.2" strokeWidth="1.4" strokeDasharray="1 .6" /></svg>
          </div>
        </div>
        <WorldMap />
        <div className="h-[120px] bg-[#f6f5f4] flex font-['Noto_Sans',sans-serif] text-[#929595]">
          <div className="ml-[23px] pt-[6px] w-[79px] flex flex-col">
            <div className="flex gap-[7px]"><Spin d="M1 8 L7 2 L13 8" /><Spin d="M1 8 L7 2 L13 8" /></div>
            <div className="h-[32px] flex items-center justify-center text-[26px] leading-none whitespace-nowrap text-[#929595]">11 :25</div>
            <div className="flex gap-[7px]"><Spin d="M1 1 L7 7 L13 1" /><Spin d="M1 1 L7 7 L13 1" /></div>
          </div>
          <div className="ml-[150px] pt-[37px] flex flex-col gap-[7px] text-[13px] leading-[16px]">
            <div className="flex items-center gap-[4px]"><span className="w-[16px] h-[16px] rounded-full border-[4px] border-[#3584e4] bg-[#bcd5f5]" /><span>24-часовой формат</span></div>
            <div className="flex items-center gap-[4px]"><span className="w-[16px] h-[16px] rounded-full border border-[#b8b4b0] bg-white" /><span>12-часовой формат</span></div>
          </div>
          <div className="ml-auto mr-[24px] mt-[33px] flex items-center gap-[0px] h-[47px] text-[13px]">
            <DateBox t="22" w="w-[56px]" /><span className="w-[6px] text-center">.</span>
            <DateBox t="02" w="w-[56px]" /><span className="w-[6px] text-center">.</span>
            <DateBox t="2025" w="w-[71px]" />
          </div>
        </div>
        <div className="h-[44px] bg-[#3c3d3f] flex items-center pl-[721px] pr-[2px]">
          <HddIcon />
          <span className="ml-[11px]"><CdIcon /></span>
          <span className="ml-[9px]"><AudioIcon /></span>
          <span className="ml-[6px]"><NetIcon /></span>
          <span className="ml-[7px]"><UsbIcon /></span>
          <span className="ml-[7px]"><FolderIcon /></span>
          <span className="ml-[8px]"><DisplayIcon /></span>
          <span className="ml-[8px]"><SharedIcon /></span>
          <span className="ml-[8px]"><VIcon /></span>
          <span className="ml-[6px]"><MouseIcon /></span>
          <span className="ml-[7px]"><DownIcon /></span>
          <span className="ml-[7px] text-[20.5px] text-white">Right Ctrl</span>
          <span className="ml-auto self-end"><Grip /></span>
        </div>
      </div>
    </div>
  );
}
